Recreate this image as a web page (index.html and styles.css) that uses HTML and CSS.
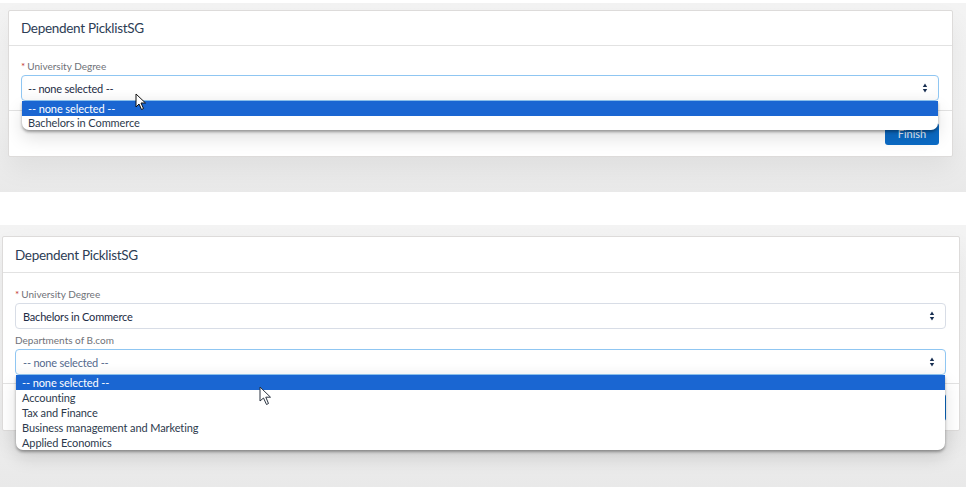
FILE: index.html
```html
<!DOCTYPE html>
<html lang="en">
<head>
<meta charset="utf-8">
<title>Dependent PicklistSG</title>
<link rel="stylesheet" href="styles.css">
</head>
<body>
<section class="panel panel-one">
  <div class="card card-one">
    <header class="card-header"><h2 class="card-title">Dependent PicklistSG</h2></header>
    <div class="card-body">
      <div class="field">
        <label class="field-label"><span class="req">*</span>University Degree</label>
        <div class="select focused">
          <span class="select-value">-- none selected --</span>
          <svg class="arrows" width="6" height="12" viewBox="0 0 6 12"><path d="M3 1.5 L5.2 5 H0.8 Z M3 10.5 L5.2 7 H0.8 Z" fill="#182f52"/></svg>
          <ul class="options">
            <li class="opt active">-- none selected --</li>
            <li class="opt">Bachelors in Commerce</li>
          </ul>
          <svg class="cursor cursor-filled" width="12" height="18" viewBox="0 0 12 18"><path d="M1 1 L1 14 L4 11 L6.5 16.5 L8.5 15.5 L6 10 L10.5 10 Z" fill="#fff" stroke="#111" stroke-width="1" stroke-linejoin="round"/></svg>
        </div>
      </div>
    </div>
    <footer class="card-footer"><button class="btn">Finish</button></footer>
  </div>
</section>

<section class="panel panel-two">
  <div class="card card-two">
    <header class="card-header"><h2 class="card-title">Dependent PicklistSG</h2></header>
    <div class="card-body">
      <div class="field">
        <label class="field-label"><span class="req">*</span>University Degree</label>
        <div class="select">
          <span class="select-value">Bachelors in Commerce</span>
          <svg class="arrows" width="6" height="12" viewBox="0 0 6 12"><path d="M3 1.5 L5.2 5 H0.8 Z M3 10.5 L5.2 7 H0.8 Z" fill="#182f52"/></svg>
        </div>
      </div>
      <div class="field field-second">
        <label class="field-label">Departments of B.com</label>
        <div class="select focused">
          <span class="select-value muted">-- none selected --</span>
          <svg class="arrows" width="6" height="12" viewBox="0 0 6 12"><path d="M3 1.5 L5.2 5 H0.8 Z M3 10.5 L5.2 7 H0.8 Z" fill="#182f52"/></svg>
          <ul class="options">
            <li class="opt active">-- none selected --</li>
            <li class="opt">Accounting</li>
            <li class="opt">Tax and Finance</li>
            <li class="opt">Business management and Marketing</li>
            <li class="opt">Applied Economics</li>
          </ul>
          <svg class="cursor cursor-hollow" width="14" height="20" viewBox="0 0 14 20"><path d="M1 1 L1 15 L4.5 12 L7.5 18.5 L9.5 17.5 L6.8 11.2 L11.5 11.2 Z" fill="#fff" fill-opacity="0.85" stroke="#2a3340" stroke-width="1" stroke-linejoin="round"/></svg>
        </div>
      </div>
    </div>
    <footer class="card-footer"><button class="btn">Finish</button></footer>
  </div>
</section>
</body>
</html>
```

FILE: styles.css
```css
* { box-sizing: border-box; }
html, body { margin: 0; padding: 0; }
body {
  width: 966px;
  height: 487px;
  overflow: hidden;
  background: #ffffff;
  font-family: Lato, "Open Sans", Arial, sans-serif;
  color: #16325c;
}

.panel {
  background: linear-gradient(#f3f3f3, #f1f1f1 60%, #e9e9e9);
}
.panel-one {
  margin-top: 3px;
  height: 189px;
  padding: 7px 13px 0 8px;
}
.panel-two {
  margin-top: 33px;
  height: 262px;
  padding: 11px 6px 0 2px;
}

.card {
  background: #fff;
  border: 1px solid #dddbda;
  border-radius: 2px;
  box-shadow: 0 12px 26px rgba(0, 0, 0, 0.06);
  display: flex;
  flex-direction: column;
}
.card-one { height: 147px; }
.card-two { height: 195px; }

.card-header {
  border-bottom: 1px solid #e2e2e2;
  padding: 0 12px;
  height: 35px;
  display: flex;
  align-items: center;
}
.card-two .card-header { height: 36px; }
.card-title {
  margin: 0;
  font-size: 13.5px;
  letter-spacing: -0.3px;
  font-weight: 400;
  color: #2d3d55;
}

.card-body {
  padding: 14px 13px 0 12px;
  display: flex;
  flex-direction: column;
}
.card-two .card-body { padding-top: 15px; }

.field { display: flex; flex-direction: column; }
.field-second { margin-top: 5px; }
.field-label {
  font-size: 10px;
  color: #6f7278;
  height: 15px;
  line-height: 12px;
}
.req { color: #c23934; margin-right: 2px; }

.select {
  position: relative;
  height: 26px;
  border: 1px solid #d8dde6;
  border-radius: 4px;
  background: #fff;
  display: flex;
  align-items: center;
  padding: 0 10px 0 6px;
}
.card-two .select { padding-left: 7px; }
.select.focused {
  border-color: #8fc6f2;
  box-shadow: inset 0 -6px 8px rgba(0, 0, 0, 0.025);
}
.select-value {
  flex: 1;
  font-size: 11px;
  letter-spacing: -0.2px;
  color: #1d2c45;
}
.select-value.muted { color: #54698d; }
.arrows { flex: none; }

.options {
  position: absolute;
  top: 25px;
  left: 0;
  right: 0;
  margin: 0;
  padding: 0;
  list-style: none;
  background: #fff;
  border-radius: 0 0 7px 7px;
  box-shadow: 0 2px 3px rgba(0, 0, 0, 0.35), 0 8px 18px rgba(0, 0, 0, 0.12);
  overflow: hidden;
  z-index: 2;
}
.opt {
  height: 15px;
  line-height: 15px;
  padding-left: 6px;
  font-size: 11px;
  letter-spacing: -0.1px;
  color: #2d3a4d;
}
.card-one .opt:last-child { height: 14px; line-height: 14px; }
.opt.active {
  background: #1a66d2;
  color: #fff;
}

.cursor { position: absolute; z-index: 3; }
.cursor-filled { left: 113px; top: 17px; }
.cursor-hollow { left: 243px; top: 36px; }

.card-footer {
  margin-top: auto;
  border-top: 1px solid #e2e2e2;
  height: 46px;
  display: flex;
  justify-content: flex-end;
  align-items: center;
  padding: 0 13px 0 0;
}
.card-two .card-footer { height: 47px; }
.btn {
  width: 54px;
  height: 22px;
  border: 0;
  border-radius: 3px;
  background: #0b6bc6;
  color: #e8f1fb;
  font-family: inherit;
  font-size: 11px;
  padding: 0;
}
.card-two .btn { height: 27px; }
```
